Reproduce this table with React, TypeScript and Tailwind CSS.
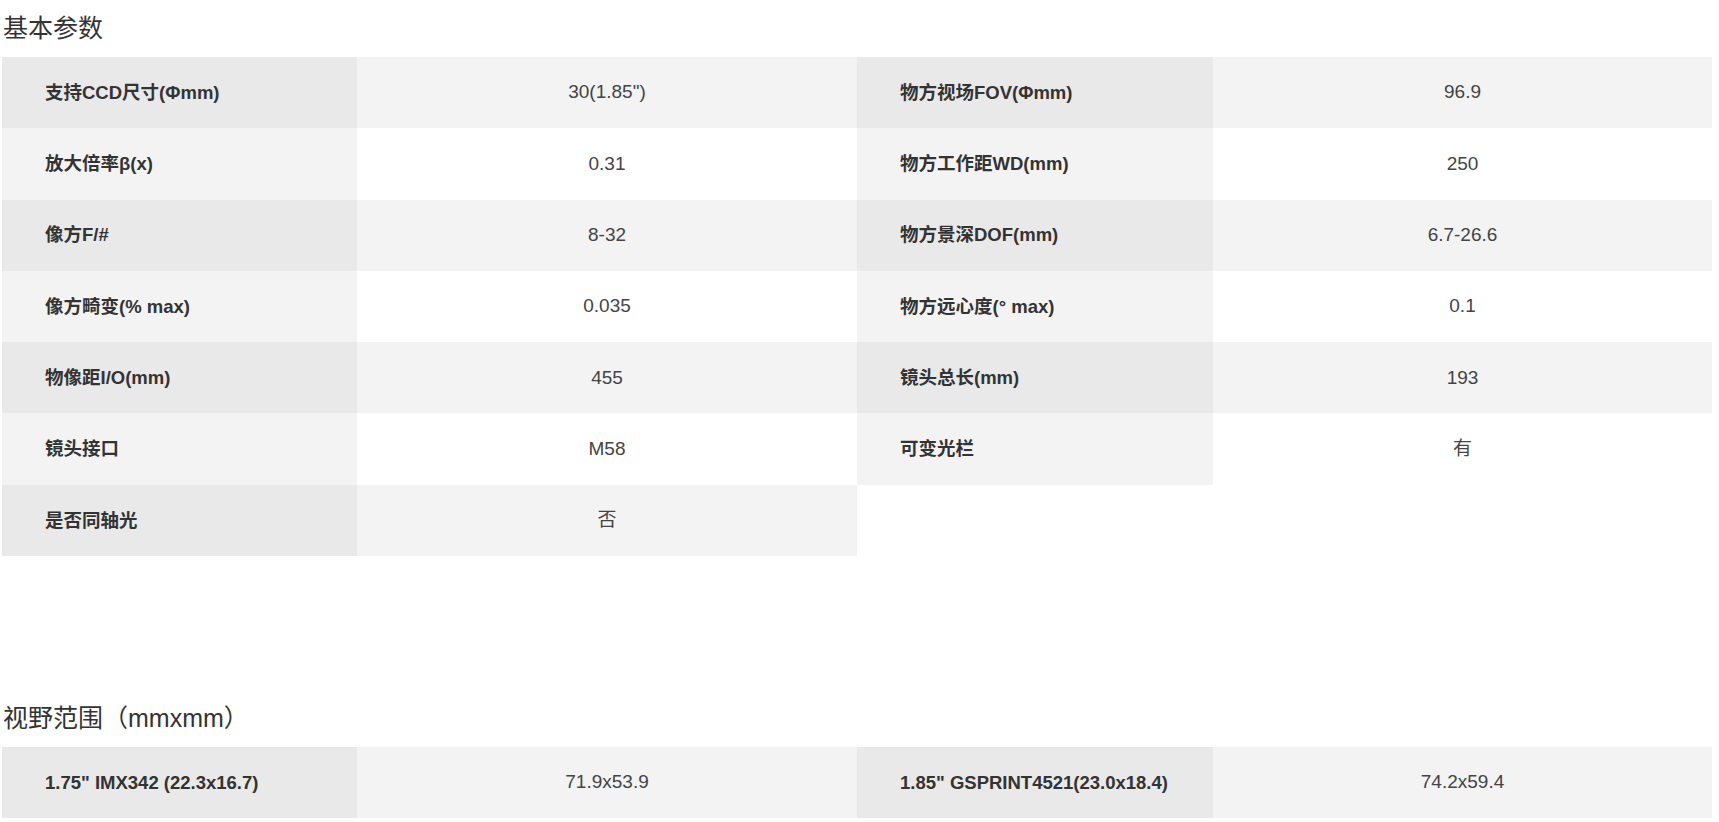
import React from 'react';

type Row = { l1: string; v1: string; l2?: string; v2?: string };

const basicRows: Row[] = [
  { l1: '支持CCD尺寸(Φmm)', v1: '30(1.85")', l2: '物方视场FOV(Φmm)', v2: '96.9' },
  { l1: '放大倍率β(x)', v1: '0.31', l2: '物方工作距WD(mm)', v2: '250' },
  { l1: '像方F/#', v1: '8-32', l2: '物方景深DOF(mm)', v2: '6.7-26.6' },
  { l1: '像方畸变(% max)', v1: '0.035', l2: '物方远心度(° max)', v2: '0.1' },
  { l1: '物像距I/O(mm)', v1: '455', l2: '镜头总长(mm)', v2: '193' },
  { l1: '镜头接口', v1: 'M58', l2: '可变光栏', v2: '有' },
  { l1: '是否同轴光', v1: '否' },
];

const fovRows: Row[] = [
  { l1: '1.75" IMX342 (22.3x16.7)', v1: '71.9x53.9', l2: '1.85" GSPRINT4521(23.0x18.4)', v2: '74.2x59.4' },
];

const font = { fontFamily: '"Liberation Sans", "Noto Sans CJK SC", sans-serif' };

const Cell: React.FC<{ text?: string; label?: boolean; odd: boolean }> = ({ text, label, odd }) => {
  if (text === undefined) return <div className="bg-white" />;
  if (label) {
    return (
      <div className={`flex items-center pl-[43px] text-[18.5px] font-bold text-[#333] ${odd ? 'bg-[#e9e9e9]' : 'bg-[#f3f3f3]'}`}>
        {text}
      </div>
    );
  }
  return (
    <div className={`flex items-center justify-center text-[19px] text-[#444] ${odd ? 'bg-[#f3f3f3]' : 'bg-white'}`}>
      {text}
    </div>
  );
};

const SpecTable: React.FC<{ title: string; rows: Row[] }> = ({ title, rows }) => (
  <section>
    <h2 className="pt-[16px] pb-[16px] pl-[1px] text-[25px] leading-[25px] font-normal text-[#333]">{title}</h2>
    <div className="w-[1710px]">
      {rows.map((r, i) => {
        const odd = i % 2 === 0;
        return (
          <div key={i} className="grid h-[71.3px] grid-cols-[355px_500px_356px_499px]">
            <Cell text={r.l1} label odd={odd} />
            <Cell text={r.v1} odd={odd} />
            <Cell text={r.l2} label odd={odd} />
            <Cell text={r.v2} odd={odd} />
          </div>
        );
      })}
    </div>
  </section>
);

export default function App() {
  return (
    <div className="min-h-screen bg-white pl-[2px]" style={font}>
      <SpecTable title="基本参数" rows={basicRows} />
      <div className="h-[134px]" />
      <SpecTable title="视野范围（mmxmm）" rows={fovRows} />
    </div>
  );
}
